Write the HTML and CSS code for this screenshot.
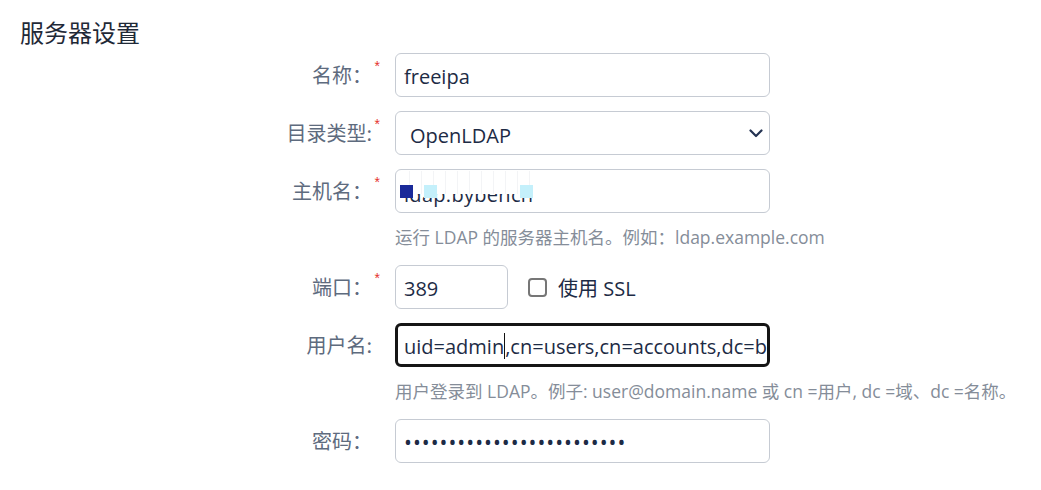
FILE: index.html
```html
<!DOCTYPE html>
<html lang="zh-CN">
<head>
<meta charset="utf-8">
<title>服务器设置</title>
<link rel="stylesheet" href="styles.css">
</head>
<body>
<div class="page">
  <h2 class="title">服务器设置</h2>
  <form class="form">
    <div class="row">
      <label class="label req">名称：</label>
      <input class="control" type="text" value="freeipa">
    </div>
    <div class="row">
      <label class="label req">目录类型:</label>
      <div class="control select">
        <span>OpenLDAP</span>
        <svg class="chev" width="14" height="9" viewBox="0 0 14 9"><path d="M1.5 1.5 L7 7 L12.5 1.5" fill="none" stroke="#243352" stroke-width="2.2" stroke-linecap="round" stroke-linejoin="round"/></svg>
      </div>
    </div>
    <div class="row">
      <label class="label req">主机名：</label>
      <div class="control host">
        <span class="host-text">ldap.bybench</span>
        <div class="mask">
          <i class="sq navy"></i><i class="sq cyan c1"></i><i class="sq cyan c2"></i>
        </div>
      </div>
    </div>
    <div class="help">运行 LDAP 的服务器主机名。例如：ldap.example.com</div>
    <div class="row">
      <label class="label req">端口：</label>
      <div class="port-wrap">
        <input class="control port" type="text" value="389">
        <label class="check"><span class="box"></span>使用 SSL</label>
      </div>
    </div>
    <div class="row">
      <label class="label">用户名:</label>
      <div class="control focus"><span class="val">uid=admin</span><span class="caret"></span><span class="val">,cn=users,cn=accounts,dc=b</span></div>
    </div>
    <div class="help">用户登录到 LDAP。例子: user@domain.name 或 cn =用户, dc =域、dc =名称。</div>
    <div class="row">
      <label class="label">密码：</label>
      <input class="control pw" type="password" value="abcdefghijklmnopqrstuvwxy">
    </div>
  </form>
</div>
</body>
</html>
```

FILE: styles.css
```css
* { box-sizing: border-box; }
body {
  margin: 0;
  background: #ffffff;
  font-family: "Open Sans", "Noto Sans CJK SC", sans-serif;
}
.page { padding: 14px 0 0 20px; }
.title {
  margin: 0 0 3px 0;
  font-size: 24px;
  line-height: 36px;
  font-weight: 400;
  color: #1f2937;
  font-family: "Noto Sans CJK SC", sans-serif;
}
.form { display: flex; flex-direction: column; gap: 14px; }
.row {
  display: grid;
  grid-template-columns: 352px 375px;
  column-gap: 23px;
  align-items: center;
}
.label {
  position: relative;
  text-align: right;
  font-size: 20px;
  color: #5e6b7e;
  font-family: "Noto Sans CJK SC", sans-serif;
  line-height: 26px;
}
.req::after {
  content: "*";
  position: absolute;
  right: -8px;
  top: -9px;
  color: #e5322d;
  font-size: 14px;
  font-family: "Liberation Sans", sans-serif;
}
.control {
  height: 44px;
  width: 375px;
  border: 1px solid #c6cbd3;
  border-radius: 6px;
  padding: 2px 8px 0 8px;
  font-family: "Open Sans", "Noto Sans CJK SC", sans-serif;
  font-size: 20px;
  color: #1d2b45;
  background: #fff;
  outline: none;
}
.select {
  display: flex;
  align-items: center;
  justify-content: space-between;
  padding: 5px 6px 0 14px;
}
.chev { margin-top: -5px; }
.host { position: relative; overflow: hidden; display: flex; align-items: center; }
.host-text { padding-top: 4px; letter-spacing: 0.3px; }
.mask {
  position: absolute;
  left: 2px;
  top: 1px;
  width: 139px;
  height: 23px;
  background:
    repeating-linear-gradient(90deg, transparent 0 11px, #f3f4f6 11px 12px),
    #ffffff;
}
.sq { position: absolute; top: 14px; width: 13px; height: 13px; }
.navy { left: 2px; background: #1a2a99; }
.cyan { background: #c4f0fb; }
.c1 { left: 26px; }
.c2 { left: 122px; }
.help {
  margin: -2px 0 2px 375px;
  font-size: 17.5px;
  line-height: 24px;
  color: #858d99;
  font-family: "Open Sans", "Noto Sans CJK SC", sans-serif;
}
.port-wrap { display: flex; align-items: center; }
.port { width: 113px; }
.check {
  display: flex;
  align-items: center;
  margin-left: 20px;
  font-size: 20px;
  color: #1d2b45;
  font-family: "Open Sans", "Noto Sans CJK SC", sans-serif;
}
.box {
  width: 19px;
  height: 19px;
  border: 2px solid #767676;
  border-radius: 4px;
  margin-right: 11px;
}
.focus {
  border: 3px solid #151515;
  display: flex;
  align-items: center;
  overflow: hidden;
  white-space: nowrap;
  padding-left: 6px;
}
.caret { display: inline-block; width: 1px; height: 26px; background: #111; flex: none; }
.val { flex: none; }
.pw { letter-spacing: 1px; font-size: 21px; }
```
